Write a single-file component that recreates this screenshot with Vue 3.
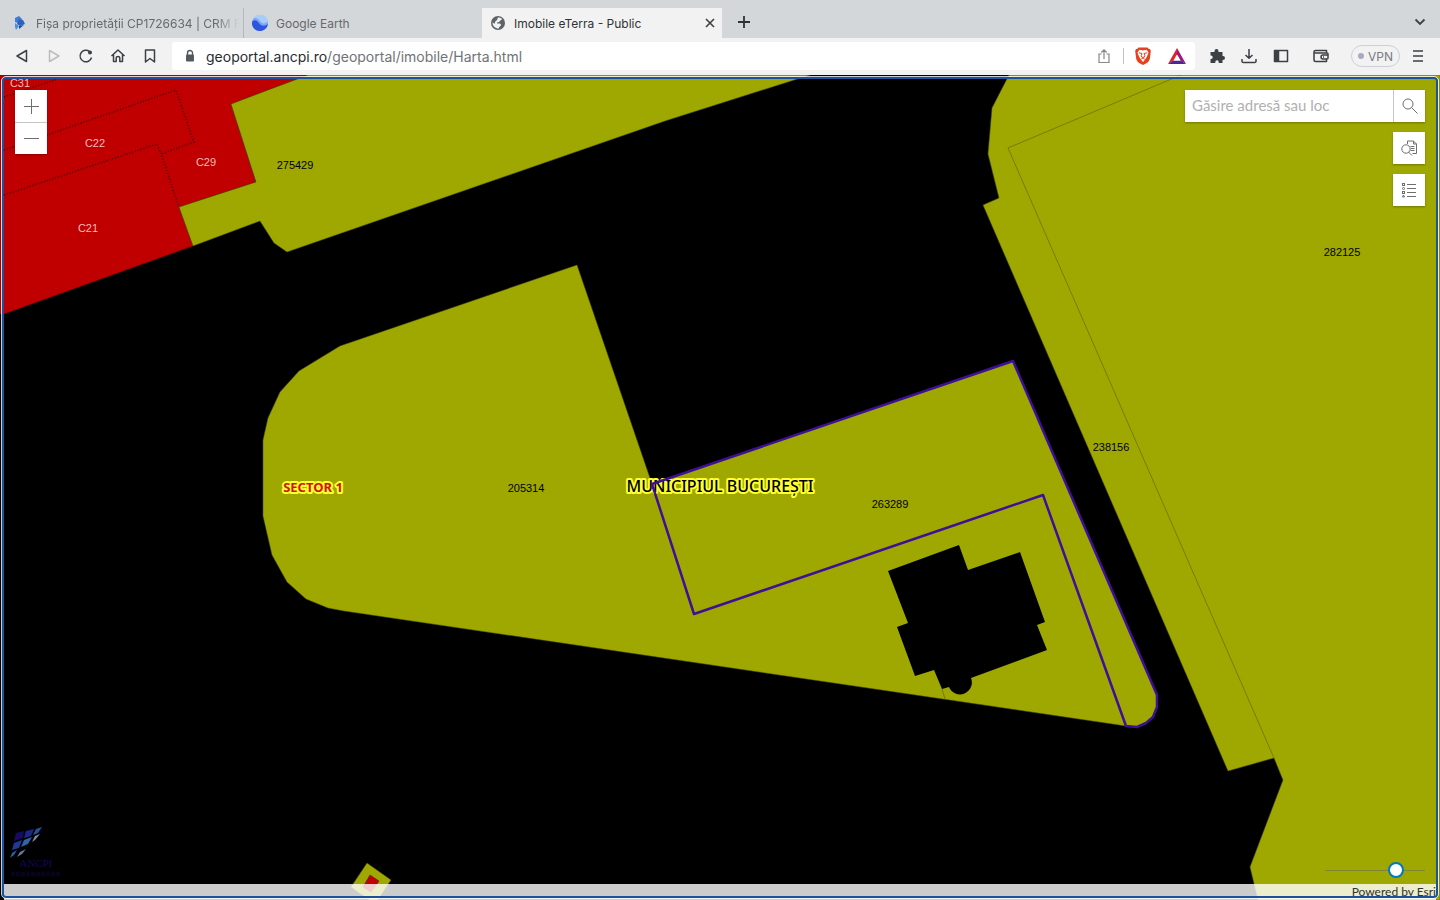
<script setup>
import { ref } from 'vue'

const address = ref('geoportal.ancpi.ro')
const query = ref('')
const opacity = ref(75)

const parcels = [
  '308,75 231,104 256,182 179,207 193,246 260,221 274,243 287,252 665,121 810,75',
  '577,265 652,484 694,614 1043,495 1126,726 344,611 328,608 306,599 287,582 272,555 263,516 263,440 268,418 280,392 299,371 340,346',
  '652,484 1013,361 1157,695 1157,707 1153,717 1146,723 1137,727 1126,726 1043,495 694,614',
  '1009,75 992,108 988,154 999,198 983,205 1228,771 1274,758 1283,780 1250,867 1258,900 1440,900 1440,75',
  '367,863 391,880 375,904 351,887'
]

const dotted = [
  '4,97 58,79',
  '4,150 176,90 194,142 161,154',
  '4,195 157,144 161,154 179,207'
]

const parcelLabels = [
  { text: '275429', x: 295, y: 169 },
  { text: '282125', x: 1342, y: 256 },
  { text: '238156', x: 1111, y: 451 },
  { text: '205314', x: 526, y: 492 },
  { text: '263289', x: 890, y: 508 }
]

const buildingLabels = [
  { text: 'C31', x: 20, y: 87 },
  { text: 'C22', x: 95, y: 147 },
  { text: 'C29', x: 206, y: 166 },
  { text: 'C21', x: 88, y: 232 }
]
</script>

<template>
  <div class="browser">
    <!-- TABS -->
    <div class="tab-strip">
      <button class="tab">
        <svg class="favicon" width="16" height="16" viewBox="0 0 16 16">
          <path d="M3 3l4-2 3 3-4 4-3-1z" fill="#3b7dd8" />
          <path d="M7 4l4 1 2 4-5 2-3-2z" fill="#2d64b8" />
          <path d="M3 8l4 3-3 4-1-3z" fill="#4c90dc" />
          <path d="M7 11l5-1-5 4z" fill="#1d4796" />
        </svg>
        <span class="tab-title faded">Fișa proprietății CP1726634 | CRM R</span>
      </button>
      <button class="tab divided">
        <svg class="favicon" width="16" height="16" viewBox="0 0 16 16">
          <circle cx="8" cy="8" r="8" fill="#79a9f5" />
          <path d="M0 7C2 4 5 5 7 8s5 4 9 1a8 8 0 0 1-16-2z" fill="#2f55e0" />
          <path d="M1 4C5 1 7 5 9 7s4 2 7-1A8 8 0 0 0 1 4z" fill="#a9cdf8" />
        </svg>
        <span class="tab-title">Google Earth</span>
      </button>
      <div class="tab active">
        <svg class="favicon" width="16" height="16" viewBox="0 0 16 16">
          <circle cx="8" cy="8" r="7" fill="#5f6368" />
          <path d="M8 2.500c2 0 3 .5 4 1.500-.5 1.500-2 1-2.500 2.500-.5 1-2.500 0-2.500 2 2 0 4-.5 4 1.500 0 1.500-2 1-2 3.500C5 13.500 2.500 11 2.500 7.500c1 .5 1.500 1 2.500 1 0-1.500 0-2.500 1.500-3C7.500 5 7 4 8 2.500z" fill="#f2f2f2" />
        </svg>
        <span class="tab-title">Imobile eTerra - Public</span>
        <button class="close" aria-label="Close tab">
          <svg width="10" height="10" viewBox="0 0 10 10"><path d="M1 1l8 8M9 1L1 9" stroke="#3c4043" stroke-width="1.600" /></svg>
        </button>
      </div>
      <button class="icon-btn new-tab" aria-label="New tab">
        <svg width="12" height="12" viewBox="0 0 12 12"><path d="M6 0v12M0 6h12" stroke="#303336" stroke-width="1.800" /></svg>
      </button>
      <button class="icon-btn tab-menu" aria-label="Search tabs">
        <svg width="12" height="8" viewBox="0 0 12 8" fill="none"><path d="M1.500 1.500L6 6l4.500-4.500" stroke="#3c4043" stroke-width="1.800" /></svg>
      </button>
    </div>

    <!-- TOOLBAR -->
    <div class="toolbar">
      <button class="icon-btn" aria-label="Back">
        <svg class="line" width="16" height="16" viewBox="0 0 16 16"><path d="M12.500 2.500v11L3 8z" /></svg>
      </button>
      <button class="icon-btn" aria-label="Forward" disabled>
        <svg class="line pale" width="16" height="16" viewBox="0 0 16 16"><path d="M3.500 2.500v11L13 8z" /></svg>
      </button>
      <button class="icon-btn" aria-label="Reload">
        <svg class="line" width="16" height="16" viewBox="0 0 16 16">
          <path d="M11.500 3.500A5.800 5.800 0 1 0 13.500 9.500" />
          <circle cx="12" cy="4.500" r="2" class="solid" stroke="none" />
        </svg>
      </button>
      <button class="icon-btn" aria-label="Home">
        <svg class="line" width="16" height="16" viewBox="0 0 16 16"><path d="M1.500 8L8 2l6.500 6M3.500 6.800v6.700h2.700V10q0-1.500 1.800-1.500T9.800 10v3.500h2.700V6.800" /></svg>
      </button>
      <button class="icon-btn" aria-label="Bookmark">
        <svg class="line" width="16" height="16" viewBox="0 0 16 16"><path d="M3.500 2h9v12L8 10.500 3.500 14z" /></svg>
      </button>

      <div class="address">
        <svg class="lock" width="16" height="16" viewBox="0 0 16 16">
          <rect x="4" y="6.500" width="8" height="7" rx="1" fill="#55585c" />
          <path d="M5.500 7V5a2.500 2.500 0 0 1 5 0v2" fill="none" stroke="#55585c" stroke-width="1.400" />
        </svg>
        <a class="url" href="#">{{ address }}<span>/geoportal/imobile/Harta.html</span></a>
        <button class="icon-btn" aria-label="Share">
          <svg width="14" height="16" viewBox="0 0 14 16" fill="none" stroke="#85878a" stroke-width="1.200">
            <path d="M4.500 6H2v8.500h10V6H9.500M7 11V2M4.300 4.500L7 1.800l2.700 2.700" />
          </svg>
        </button>
        <span class="bar"></span>
        <button class="icon-btn" aria-label="Brave Shields">
          <svg width="16" height="20" viewBox="0 0 16 20">
            <path d="M3.500 1.500h9l1 1.200 1.500.3.800 2-1 8q-.8 3-3.800 4.500L8 19l-3-1.500q-3-1.500-3.800-4.500l-1-8 .8-2 1.500-.3z" fill="#e8401f" />
            <path d="M8 4.500l3.500-.8 2 2.800-1.500 4-1.200 2L8 16l-2.800-3.500-1.200-2-1.500-4 2-2.800z" fill="#fff" />
            <path d="M4 6.800l3 .7-.8 2.200.8 1.800L8 11l1 .5.800-1.800L9 7.500l3-.7M6.300 13L8 12l1.700 1" fill="none" stroke="#e8401f" stroke-width="1" />
          </svg>
        </button>
        <button class="icon-btn rewards" aria-label="Brave Rewards">
          <svg width="18" height="16" viewBox="0 0 18 16">
            <path d="M9 0L0 16 5.200 13 9 6.200z" fill="#e32424" />
            <path d="M9 0l9 16-5.200-3L9 6.200z" fill="#9c1b7c" />
            <path d="M0 16h18l-5.200-3.300H5.200z" fill="#4b2599" />
          </svg>
        </button>
      </div>

      <button class="icon-btn ext" aria-label="Extensions">
        <svg width="16" height="16" viewBox="0 0 16 16" fill="#3c4043">
          <path d="M1.500 4h4V3a2 2 0 0 1 4 0v1h4v4h.5a2 2 0 0 1 0 4h-.5v3H9.700v-1a1.700 1.700 0 0 0-3.400 0v1H1.500v-4H2a1.700 1.700 0 0 0 0-3.500h-.5z" />
        </svg>
      </button>
      <button class="icon-btn" aria-label="Downloads">
        <svg class="line" width="16" height="16" viewBox="0 0 16 16"><path d="M8 1v9M4.500 7L8 10.300 11.500 7M1 11v2.200q0 1.300 1.300 1.300h11.400q1.300 0 1.300-1.300V11" /></svg>
      </button>
      <button class="icon-btn" aria-label="Sidebar">
        <svg class="line" width="16" height="16" viewBox="0 0 16 16">
          <rect x="1.500" y="2.500" width="13" height="11" />
          <path d="M2 3h3.500v10H2z" class="solid" />
        </svg>
      </button>
      <button class="icon-btn wallet" aria-label="Wallet">
        <svg class="line" width="16" height="16" viewBox="0 0 16 16">
          <path d="M13.500 5V2.500H2.500Q1 2.500 1 4v8q0 1.500 1.500 1.500h11V11M1 4.500Q1.500 5 2.500 5H14q1 0 1 1v4q0 1-1 1h-4a2 2 0 0 1 0-4h5M10 9h1" />
        </svg>
      </button>
      <button class="vpn"><i></i>VPN</button>
      <button class="icon-btn" aria-label="Menu">
        <svg width="10" height="12" viewBox="0 0 10 12"><path d="M0 1h10M0 6h10M0 11h10" stroke="#3c4043" stroke-width="1.600" /></svg>
      </button>
    </div>

    <!-- MAP -->
    <main class="map">
      <svg class="canvas" viewBox="0 75 1440 825" preserveAspectRatio="xMidYMid slice">
        <polygon class="building" points="0,75 308,75 231,104 256,182 179,207 193,246 4,314 0,314" />
        <polygon v-for="p in parcels" :key="p" class="parcel" :points="p" />
        <polygon class="building" points="370,875 379,881 371,892 363,887" />
        <polyline v-for="d in dotted" :key="d" class="dotted" :points="d" />
        <polyline class="limit" points="1181,75 1008,148 1274,758" />
        <path class="limit" d="M942 689l3 10" />
        <path d="M888 571L959 545 968 570 1020 552 1045 622 1037 625 1047 650 971 678A11 11 0 0 1 949 687L942 689 934 670 915 676 897 627 908 623z" />

        <text v-for="l in parcelLabels" :key="l.text" class="label" :x="l.x" :y="l.y">{{ l.text }}</text>
        <text v-for="l in buildingLabels" :key="l.text" class="label light" :x="l.x" :y="l.y">{{ l.text }}</text>
        <text class="sector" x="313" y="492">SECTOR 1</text>
        <text class="city" x="720" y="492">MUNICIPIUL BUCUREȘTI</text>
        <polygon class="selected" :points="parcels[2]" />

        <g class="logo">
          <path d="M16 833l8-2-1 7-9 3z" fill="#150b63" />
          <path d="M26 831l8-2-3 7-7 2z" fill="#1c2787" />
          <path d="M36 829l6-2-4 6-5 2z" fill="#23549b" />
          <path d="M14 843l8-3-3 8-7 2z" fill="#203a94" />
          <path d="M24 840l8-3-4 7-7 3z" fill="#2b65ae" />
          <path d="M35 836l5-2-5 6-3 2z" fill="#7d8ca5" />
          <path d="M12 853l5-3-3 5-4 3z" fill="#305ea0" />
          <path d="M20 852l6-3-4 5-5 3z" fill="#607ca0" />
          <text x="36" y="867">ANCPI</text>
          <path d="M11 874h50" stroke="#06031a" stroke-width="5" stroke-dasharray="4 1" />
        </g>
      </svg>

      <div class="zoom">
        <button aria-label="Zoom in">
          <svg width="15" height="15" viewBox="0 0 15 15"><path d="M7.500 0v15M0 7.500h15" /></svg>
        </button>
        <button aria-label="Zoom out">
          <svg width="15" height="15" viewBox="0 0 15 15"><path d="M0 7.500h15" /></svg>
        </button>
      </div>

      <div class="tools">
        <form class="search" @submit.prevent>
          <input v-model="query" type="text" aria-label="Găsire adresă sau loc" placeholder="Găsire adresă sau loc" />
          <button aria-label="Search">
            <svg width="16" height="16" viewBox="0 0 16 16"><circle cx="6" cy="6" r="5" /><path d="M9.500 9.500L15.500 15.500" /></svg>
          </button>
        </form>
        <button class="tool" aria-label="Search parcels">
          <svg width="16" height="16" viewBox="0 0 16 16">
            <path d="M6.500 4V1h6l3 3v9.500h-4M12.500 1v3h3M9.500 6.500h4M10 8.500h3.500M9.500 10.500h4M7.500 12l3.500 3.500" />
            <circle cx="5" cy="9" r="4.200" />
          </svg>
        </button>
        <button class="tool" aria-label="Legend">
          <svg width="16" height="16" viewBox="0 0 16 16">
            <path d="M6 2.500h9M6 6.500h9M6 10.500h9M6 14.500h9" />
            <rect x="1.500" y="1.500" width="2" height="2" /><circle cx="2.500" cy="6.500" r="1" />
            <rect x="1.500" y="9.500" width="2" height="2" /><path d="M1.500 15l1-2 1 2z" />
          </svg>
        </button>
      </div>

      <input v-model="opacity" class="opacity" type="range" min="0" max="100" aria-label="Opacity" />
      <footer class="credits">Powered by <a href="#">Esri</a></footer>
      <div class="focus-ring"></div>
    </main>
  </div>
</template>

<style>
body { margin: 0; }
</style>

<style scoped>
.browser {
  height: 100vh;
  display: flex;
  flex-direction: column;
  overflow: hidden;
  font-family: Inter, Roboto, sans-serif;
}
button { padding: 0; border: 0; background: none; font: inherit; cursor: pointer; }
svg { display: block; flex-shrink: 0; }

/* TABS */
.tab-strip {
  height: 38px;
  box-sizing: border-box;
  padding: 8px 4px 0;
  display: flex;
  flex-shrink: 0;
  background: #d3d7da;
}
.tab {
  width: 239px;
  box-sizing: border-box;
  padding: 0 4px 0 8px;
  display: flex;
  align-items: center;
  gap: 8px;
  font-size: 12px;
  color: #66696d;
  text-align: left;
}
.tab.divided { border-left: 1px solid #b5b9bc; }
.tab.active { width: 240px; background: #f2f2f2; color: #303336; }
.tab-title { flex: 1; overflow: hidden; white-space: nowrap; }
.faded { mask-image: linear-gradient(to right, #000 88%, transparent); }
.close { width: 16px; height: 16px; display: grid; place-items: center; }
.new-tab { margin-left: 6px; }
.tab-menu { margin-left: auto; }

/* TOOLBAR */
.toolbar {
  height: 37px;
  box-sizing: border-box;
  padding: 0 6px 1px;
  display: flex;
  align-items: center;
  flex-shrink: 0;
  background: #f2f2f2;
}
.icon-btn { width: 32px; height: 28px; display: flex; flex-shrink: 0; align-items: center; justify-content: center; }
.line { fill: none; stroke: #3c4043; stroke-width: 1.5; stroke-linejoin: round; }
.pale { stroke: #bbbdbf; }
.solid { fill: #3c4043; }
.address {
  flex: 1;
  min-width: 0;
  height: 28px;
  margin: 0 6px;
  padding: 0 2px 0 10px;
  box-sizing: border-box;
  display: flex;
  align-items: center;
  background: #fff;
  border-radius: 3px;
}
.lock { margin-right: 8px; }
.url { flex: 1; overflow: hidden; white-space: nowrap; font-size: 14px; color: #292c2f; text-decoration: none; }
.url span { color: #707377; }
.bar { width: 1px; height: 16px; margin: 0 3px; background: #bfc1c4; }
.rewards { margin-left: 2px; }
.wallet { margin: 0 14px 0 8px; }
.vpn {
  width: 49px;
  height: 22px;
  margin-right: 2px;
  border: 1px solid #cfd0d6;
  border-radius: 11px;
  display: flex;
  align-items: center;
  justify-content: center;
  gap: 4px;
  font-size: 12px;
  color: #777b84;
}
.vpn i { width: 6px; height: 6px; border-radius: 50%; background: #a9a9c0; }

/* MAP */
.map { flex: 1; min-height: 0; position: relative; background: #000; overflow: hidden; font-family: Lato, sans-serif; }
.canvas { width: 100%; height: 100%; }
.parcel { fill: #9fa800; stroke: #4c5000; stroke-width: 0.5; }
.building { fill: #c00000; stroke: #500; stroke-width: 0.5; }
.dotted { fill: none; stroke: #3a0000; stroke-width: 1.5; stroke-dasharray: 1 2; }
.limit { fill: none; stroke: #777c08; stroke-width: 1; }
.selected { fill: none; stroke: #3e0f98; stroke-width: 2.5; stroke-linejoin: round; }
.label { font: 11px "Liberation Sans", sans-serif; text-anchor: middle; }
.light { fill: #f0bcbc; }
.sector, .city { text-anchor: middle; paint-order: stroke; stroke: #ffff32; stroke-width: 4; stroke-linejoin: round; }
.sector { font: bold 13px "Noto Sans", sans-serif; fill: #d01414; }
.city { font: 500 16px "Noto Sans", sans-serif; fill: #000; }
.logo text { font: 11px "Liberation Serif", serif; fill: #100951; text-anchor: middle; }

/* MAP WIDGETS */
.zoom {
  position: absolute;
  top: 15px;
  left: 15px;
  width: 32px;
  background: #fff;
  box-shadow: 0 1px 2px rgba(0, 0, 0, 0.3);
}
.zoom button, .search button, .tool { width: 32px; height: 32px; display: grid; place-items: center; background: #fff; }
.zoom button + button { box-shadow: inset 0 1px #c5c5c5; }
.zoom svg, .search svg, .tool svg { fill: none; stroke: #6e6e6e; stroke-width: 1; }
.tools { position: absolute; top: 15px; right: 15px; display: flex; flex-direction: column; align-items: flex-end; gap: 10px; }
.search { display: flex; box-shadow: 0 1px 2px rgba(0, 0, 0, 0.3); }
.search input {
  width: 208px;
  height: 32px;
  box-sizing: border-box;
  padding: 0 7px 2px;
  border: 0;
  font: 15px Lato, sans-serif;
  color: #323232;
}
.search input::placeholder { color: #b0b0b0; }
.search button { border-left: 1px solid #c5c5c5; box-sizing: border-box; }
.tool { box-shadow: 0 1px 2px rgba(0, 0, 0, 0.3); }

.opacity {
  position: absolute;
  right: 15px;
  bottom: 22px;
  width: 100px;
  height: 16px;
  margin: 0;
  appearance: none;
  background: linear-gradient(#7f8430, #7f8430) center / 100% 1px no-repeat;
}
.opacity::-webkit-slider-thumb {
  appearance: none;
  width: 16px;
  height: 16px;
  box-sizing: border-box;
  border: 2px solid #0079c1;
  border-radius: 50%;
  background: #fff;
}
.credits {
  position: absolute;
  left: 4px;
  right: 4px;
  bottom: 0;
  height: 16px;
  line-height: 16px;
  background: rgba(255, 255, 255, 0.8);
  font-size: 12px;
  color: #323232;
  text-align: right;
}
.credits a { color: inherit; text-decoration: none; }
.focus-ring {
  position: absolute;
  inset: 2px;
  border: 2px solid #1b519f;
  border-radius: 4px;
  outline: 1px solid rgba(255, 255, 255, 0.8);
  pointer-events: none;
}
</style>
